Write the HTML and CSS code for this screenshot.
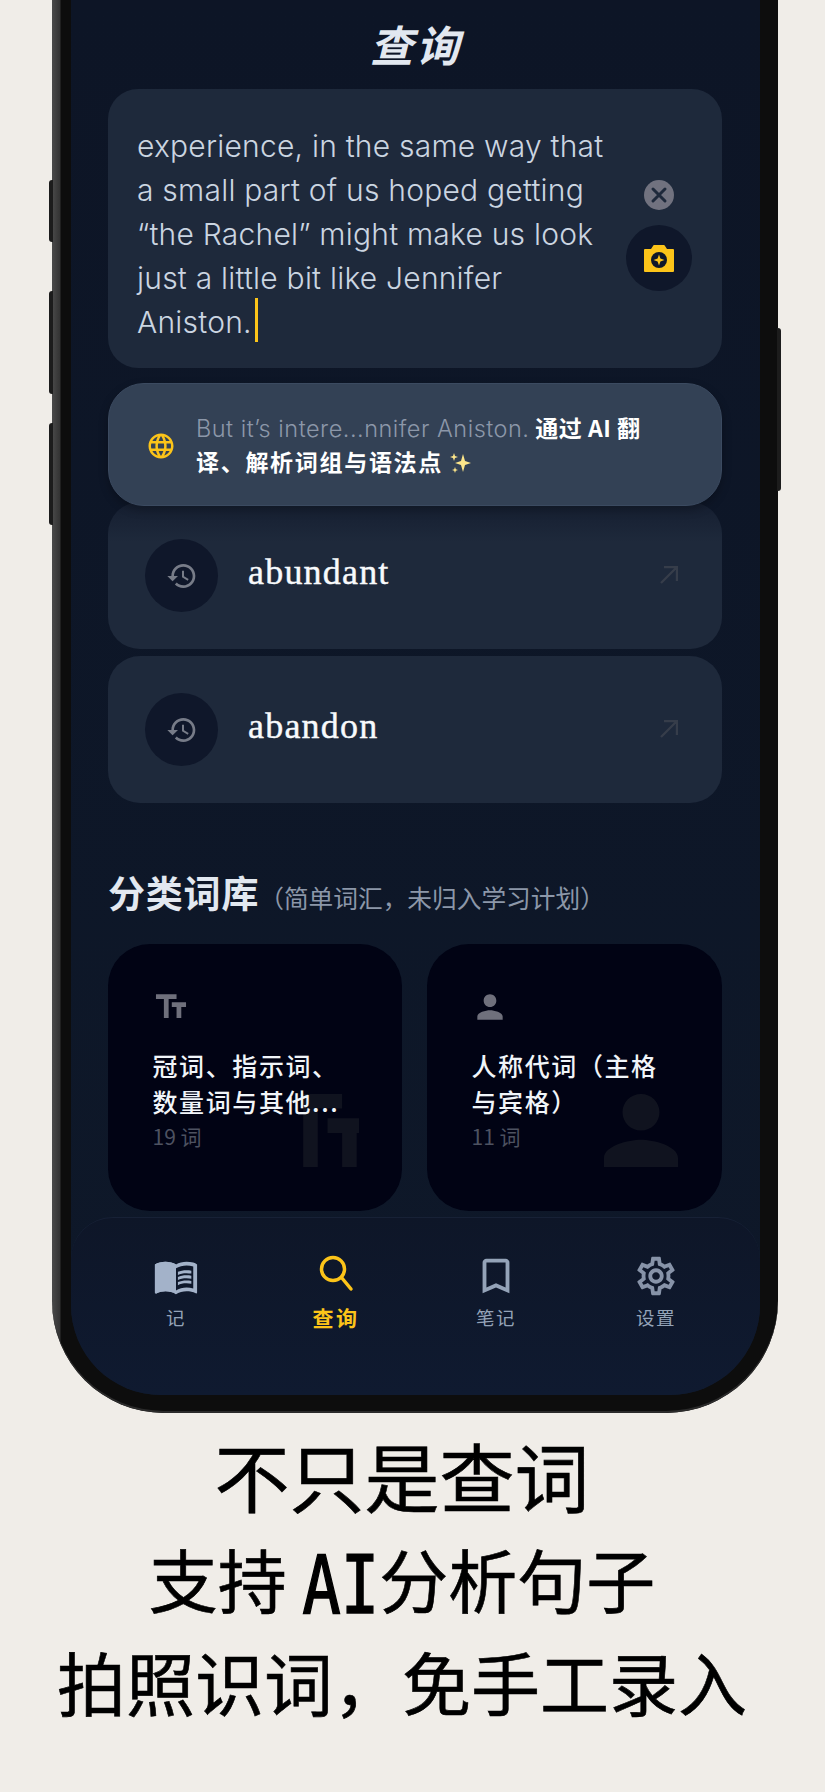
FILE: index.html
```html
<!DOCTYPE html>
<html lang="zh-CN">
<head>
    <meta charset="UTF-8">
    <meta name="viewport" content="width=device-width, initial-scale=1.0">
    <title>查询</title>
    <link rel="stylesheet" href="styles.css">
</head>
<body>
    <div class="phone">
        <span class="side-btn btn-a"></span>
        <span class="side-btn btn-b"></span>
        <span class="side-btn btn-c"></span>
        <span class="side-btn btn-d"></span>
        <div class="screen">
            <div class="content">
                <h1 class="title">查询</h1>

                <div class="search-card">
                    <p class="search-text">experience, in the same way that<br>a small part of us hoped getting<br>“the Rachel” might make us look<br>just a little bit like Jennifer<br>Aniston.<span class="caret"></span></p>
                    <div class="search-actions">
                        <svg class="clear-icon" viewBox="0 0 30 30"><circle cx="15" cy="15" r="15" fill="#71727f"/><path d="M9 9l12 12M21 9L9 21" stroke="#1e293b" stroke-width="3" stroke-linecap="round"/></svg>
                        <div class="camera-btn">
                            <svg width="30" height="27" viewBox="0 0 30 27"><path d="M1 4h6l2-3a1.5 1.5 0 0 1 1.200-1h9.600a1.500 1.500 0 0 1 1.200 1l2 3h6a1 1 0 0 1 1 1v21a1 1 0 0 1-1 1H1a1 1 0 0 1-1-1V5a1 1 0 0 1 1-1z" fill="#fcc419"/><circle cx="15" cy="15" r="8" fill="#0f172a"/><path d="M15 9.500l1.400 4.100 4.100 1.400-4.100 1.400-1.400 4.100-1.400-4.100-4.100-1.400 4.100-1.400z" fill="#fcc419"/></svg>
                        </div>
                    </div>
                </div>

                <div class="suggest-card">
                    <svg class="globe" viewBox="0 0 24 24" fill="#fcc419"><path d="M11.990 2C6.470 2 2 6.480 2 12s4.470 10 9.990 10C17.520 22 22 17.520 22 12S17.520 2 11.990 2zm6.930 6h-2.950c-.32-1.250-.78-2.450-1.380-3.560 1.840.63 3.370 1.910 4.330 3.560zM12 4.040c.83 1.200 1.480 2.530 1.910 3.960h-3.820c.43-1.430 1.080-2.760 1.910-3.960zM4.260 14C4.100 13.360 4 12.690 4 12s.1-1.360.26-2h3.380c-.08.66-.14 1.320-.14 2 0 .68.06 1.340.14 2H4.260zm.82 2h2.950c.32 1.250.78 2.450 1.380 3.560-1.840-.63-3.370-1.900-4.330-3.560zm2.950-8H5.080c.96-1.660 2.490-2.930 4.330-3.560C8.810 5.550 8.350 6.750 8.030 8zM12 19.960c-.83-1.200-1.480-2.530-1.910-3.960h3.820c-.43 1.430-1.080 2.760-1.910 3.960zM14.340 14H9.660c-.09-.66-.16-1.320-.16-2 0-.68.07-1.350.16-2h4.680c.09.65.16 1.320.16 2 0 .68-.07 1.340-.16 2zm.25 5.560c.6-1.110 1.060-2.310 1.380-3.560h2.950c-.96 1.650-2.490 2.930-4.330 3.560zM16.360 14c.08-.66.14-1.320.14-2 0-.68-.06-1.340-.14-2h3.380c.16.64.26 1.310.26 2s-.1 1.360-.26 2h-3.380z"/></svg>
                    <p class="suggest-text"><span class="suggest-quote">But it’s intere...nnifer Aniston.</span> 通过 AI 翻<br><span class="suggest-wide">译、解析词组与语法点</span> <svg class="sparkles" viewBox="0 0 24 24" fill="#fde68a"><path d="M14 3l2 7 6 2-6 2-2 7-2-7-6-2 6-2z"/><path d="M5 2l1 3 3 1-3 1-1 3-1-3-3-1 3-1zM6 16l.8 2.200L9 19l-2.200.8L6 22l-.8-2.200L3 19l2.200-.8z"/></svg></p>
                </div>

                <div class="history-list">
                    <div class="history-item first">
                        <div class="history-icon">
                            <svg width="32" height="32" viewBox="0 0 24 24" fill="#777c88"><path d="M13 3c-4.970 0-9 4.030-9 9H1l3.890 3.890.07.14L9 12H6c0-3.870 3.130-7 7-7s7 3.130 7 7-3.130 7-7 7c-1.930 0-3.680-.79-4.940-2.060l-1.420 1.420C8.270 19.990 10.510 21 13 21c4.970 0 9-4.030 9-9s-4.030-9-9-9zm-1 5v5l4.280 2.540.72-1.210-3.500-2.080V8H12z"/></svg>
                        </div>
                        <span class="history-word">abundant</span>
                        <svg class="history-arrow" viewBox="0 0 18 18"><path d="M1 17L17 1M4 1h13v14" fill="none" stroke="#363d4a" stroke-width="2.400"/></svg>
                    </div>
                    <div class="history-item">
                        <div class="history-icon">
                            <svg width="32" height="32" viewBox="0 0 24 24" fill="#777c88"><path d="M13 3c-4.970 0-9 4.030-9 9H1l3.890 3.890.07.14L9 12H6c0-3.870 3.130-7 7-7s7 3.130 7 7-3.130 7-7 7c-1.930 0-3.680-.79-4.940-2.060l-1.420 1.420C8.270 19.990 10.510 21 13 21c4.970 0 9-4.030 9-9s-4.030-9-9-9zm-1 5v5l4.280 2.540.72-1.210-3.500-2.080V8H12z"/></svg>
                        </div>
                        <span class="history-word">abandon</span>
                        <svg class="history-arrow" viewBox="0 0 18 18"><path d="M1 17L17 1M4 1h13v14" fill="none" stroke="#363d4a" stroke-width="2.400"/></svg>
                    </div>
                </div>

                <h2 class="section-title">分类词库<span class="section-note">（简单词汇，未归入学习计划）</span></h2>

                <div class="category-grid">
                    <div class="category-card">
                        <svg class="category-icon" viewBox="0 0 24 24" fill="#6f707c"><path d="M2.500 4v3h5v12h3V7h5V4h-13zm19 5h-9v3h3v7h3v-7h3V9z"/></svg>
                        <svg class="category-mark" viewBox="7.500 4 11.430 15" fill="#10131f"><path d="M2.500 4v3h5v12h3V7h5V4h-13zm19 5h-9v3h3v7h3v-7h3V9z"/></svg>
                        <p class="category-name">冠词、指示词、<br>数量词与其他...</p>
                        <p class="category-count">19 词</p>
                    </div>
                    <div class="category-card">
                        <svg class="category-icon" viewBox="0 0 24 24" fill="#6f707c"><path d="M12 12c2.210 0 4-1.790 4-4s-1.790-4-4-4-4 1.790-4 4 1.790 4 4 4zm0 2c-2.670 0-8 1.340-8 4v2h16v-2c0-2.660-5.330-4-8-4z"/></svg>
                        <svg class="category-mark person" viewBox="4 4 16 16" preserveAspectRatio="none" fill="#10131f"><path d="M12 12c2.210 0 4-1.790 4-4s-1.790-4-4-4-4 1.790-4 4 1.790 4 4 4zm0 2c-2.670 0-8 1.340-8 4v2h16v-2c0-2.660-5.330-4-8-4z"/></svg>
                        <p class="category-name">人称代词（主格<br>与宾格）</p>
                        <p class="category-count">11 词</p>
                    </div>
                </div>
            </div>

            <nav class="tab-bar">
                <div class="tab">
                    <svg class="tab-icon" viewBox="0 0 24 24" fill="#a3b2c9"><path d="M21 5c-1.110-.35-2.330-.5-3.500-.5-1.950 0-4.050.4-5.500 1.500-1.450-1.100-3.550-1.500-5.500-1.500S2.450 4.900 1 6v14.650c0 .25.25.5.5.5.1 0 .15-.05.25-.05C3.100 20.450 5.050 20 6.500 20c1.950 0 4.050.4 5.500 1.500 1.350-.85 3.800-1.500 5.500-1.500 1.650 0 3.350.3 4.750 1.050.1.05.15.05.25.05.25 0 .5-.25.5-.5V6c-.6-.45-1.250-.75-2-1zm0 13.500c-1.100-.35-2.300-.5-3.500-.5-1.700 0-4.150.65-5.500 1.500V8c1.350-.85 3.800-1.500 5.500-1.500 1.200 0 2.400.15 3.500.5v11.500z"/><path d="M1 6c1.450-1.100 3.550-1.500 5.500-1.500S10.550 4.900 12 6v15.500c-1.450-1.100-3.550-1.500-5.500-1.500-1.450 0-3.400.45-4.750 1.100L1 21z"/><path d="M17.500 10.500c.88 0 1.730.09 2.500.26V9.240c-.79-.15-1.640-.24-2.500-.24-1.700 0-3.240.29-4.500.83v1.660c1.130-.64 2.700-.99 4.500-.99zM13 12.490v1.660c1.130-.64 2.700-.99 4.500-.99.880 0 1.730.09 2.500.26V11.900c-.79-.15-1.640-.24-2.500-.24-1.700 0-3.240.3-4.500.83zM17.500 14.330c-1.700 0-3.240.29-4.500.83v1.660c1.130-.64 2.700-.99 4.500-.99.880 0 1.730.09 2.500.26v-1.520c-.79-.16-1.640-.24-2.500-.24z"/></svg>
                    <span class="tab-label">记</span>
                </div>
                <div class="tab active">
                    <svg class="tab-icon" viewBox="0 0 46 46"><circle cx="20" cy="18" r="11.500" fill="none" stroke="#fcc419" stroke-width="3.500"/><path d="M28.500 26.500L38 38" stroke="#fcc419" stroke-width="3.500" stroke-linecap="round"/></svg>
                    <span class="tab-label">查询</span>
                </div>
                <div class="tab">
                    <svg class="tab-icon" viewBox="0 0 24 24" fill="#94a3b8"><path d="M17 3H7c-1.100 0-2 .9-2 2v16l7-3 7 3V5c0-1.100-.9-2-2-2zm0 15l-5-2.180L7 18V5h10v13z"/></svg>
                    <span class="tab-label">笔记</span>
                </div>
                <div class="tab">
                    <svg class="tab-icon" viewBox="0 0 24 24" fill="#8793a8"><path d="M19.430 12.980c.04-.32.07-.64.07-.98 0-.34-.03-.66-.07-.98l2.110-1.650c.19-.15.24-.42.12-.64l-2-3.460c-.09-.16-.26-.25-.44-.25-.06 0-.12.01-.17.03l-2.490 1c-.52-.4-1.080-.73-1.690-.98l-.38-2.650C14.460 2.180 14.250 2 14 2h-4c-.25 0-.46.18-.49.42l-.38 2.650c-.61.25-1.170.59-1.690.98l-2.490-1c-.06-.02-.12-.03-.18-.03-.17 0-.34.09-.43.25l-2 3.460c-.13.22-.07.49.12.64l2.110 1.650c-.04.32-.07.65-.07.98 0 .33.03.66.07.98l-2.110 1.650c-.19.15-.24.42-.12.64l2 3.460c.09.16.26.25.44.25.06 0 .12-.01.17-.03l2.490-1c.52.4 1.080.73 1.690.98l.38 2.650c.03.24.24.42.49.42h4c.25 0 .46-.18.49-.42l.38-2.650c.61-.25 1.170-.59 1.690-.98l2.490 1c.06.02.12.03.18.03.17 0 .34-.09.43-.25l2-3.460c.12-.22.07-.49-.12-.64l-2.110-1.650zm-1.980-1.710c.04.31.05.52.05.73 0 .21-.02.43-.05.73l-.14 1.130.89.7 1.080.84-.7 1.210-1.270-.51-1.040-.42-.9.68c-.43.32-.84.56-1.250.73l-1.060.43-.16 1.130-.2 1.350h-1.400l-.19-1.350-.16-1.130-1.060-.43c-.43-.18-.83-.41-1.230-.71l-.91-.7-1.060.43-1.270.51-.7-1.210 1.080-.84.89-.7-.14-1.130c-.03-.31-.05-.54-.05-.74s.02-.43.05-.73l.14-1.130-.89-.7-1.080-.84.7-1.210 1.270.51 1.040.42.9-.68c.43-.32.84-.56 1.250-.73l1.060-.43.16-1.130.2-1.350h1.390l.19 1.350.16 1.130 1.060.43c.43.18.83.41 1.230.71l.91.7 1.060-.43 1.270-.51.7 1.210-1.070.85-.89.7.14 1.130zM12 8c-2.210 0-4 1.790-4 4s1.790 4 4 4 4-1.790 4-4-1.790-4-4-4zm0 6c-1.100 0-2-.9-2-2s.9-2 2-2 2 .9 2 2-.9 2-2 2z"/></svg>
                    <span class="tab-label">设置</span>
                </div>
            </nav>
        </div>
    </div>

    <div class="caption">
        <p class="caption-big">不只是查词</p>
        <p class="caption-line">支持 <span class="caption-latin">AI</span>分析句子</p>
        <p class="caption-line">拍照识词，免手工录入</p>
    </div>
</body>
</html>
```

FILE: styles.css
```css
* {
    box-sizing: border-box;
}

body {
    margin: 0;
    width: 825px;
    height: 1792px;
    overflow: hidden;
    background-color: #f0ede8;
    font-family: "Noto Sans CJK SC", sans-serif;
}

p, h1, h2 {
    margin: 0;
}

.phone {
    position: relative;
    width: 726px;
    height: 1413px;
    margin-left: 52px;
    padding: 0 18px 18px 19px;
    border-radius: 0 0 112px 112px;
    background: linear-gradient(90deg, #4a4a4a 0, #333 8px, #0d0d0d 9px, #0d0d0d 100%);
    box-shadow: inset 0 -2px 0 #2b2b2b;
}

.side-btn {
    position: absolute;
    width: 4px;
    background-color: #1c1c1c;
}

.btn-a { left: -3px; top: 180px; height: 62px; border-radius: 3px 0 0 3px; }
.btn-b { left: -3px; top: 291px; height: 103px; border-radius: 3px 0 0 3px; }
.btn-c { left: -3px; top: 423px; height: 102px; border-radius: 3px 0 0 3px; }
.btn-d { right: -3px; top: 328px; height: 163px; border-radius: 0 3px 3px 0; }

.screen {
    height: 1395px;
    display: flex;
    flex-direction: column;
    overflow: hidden;
    border-radius: 0 0 90px 90px;
    background: linear-gradient(180deg, #0d1526 0, #0e1829 100%);
}

.content {
    flex: 1;
    padding: 0 38px 0 37px;
}

.title {
    height: 89px;
    padding-top: 14px;
    text-indent: 2px;
    text-align: center;
    color: #e2e8f0;
    font-size: 43px;
    line-height: 58px;
    font-style: italic;
    font-weight: 700;
    letter-spacing: 3px;
}

.search-card {
    display: flex;
    justify-content: space-between;
    height: 279px;
    padding: 35px 30px 0 29px;
    border-radius: 30px;
    background-color: #1e293b;
}

.search-text {
    color: #cbd5e1;
    font-family: Inter, sans-serif;
    font-size: 30px;
    font-weight: 300;
    line-height: 44px;
    letter-spacing: 0.22px;
}

.caret {
    display: inline-block;
    width: 3px;
    height: 44px;
    margin-left: 3px;
    vertical-align: top;
    background-color: #fcc419;
    transform: translateY(-2px);
}

.search-actions {
    width: 66px;
    padding-top: 56px;
    display: flex;
    flex-direction: column;
    align-items: center;
    gap: 15px;
}

.clear-icon {
    width: 30px;
    height: 30px;
}

.camera-btn {
    width: 66px;
    height: 66px;
    display: flex;
    align-items: center;
    justify-content: center;
    border-radius: 50%;
    background-color: #0f172a;
}

.suggest-card {
    position: relative;
    z-index: 1;
    display: flex;
    align-items: center;
    height: 123px;
    margin-top: 15px;
    padding: 0 36px 0 37px;
    gap: 20px;
    border-radius: 36px;
    border: 1px solid #3b4a60;
    background-color: #334155;
    box-shadow: 0 4px 10px rgba(0, 0, 0, 0.25);
}

.globe {
    flex: none;
    width: 30px;
    height: 30px;
    margin-top: 2px;
}

.suggest-text {
    color: #fff;
    font-size: 23px;
    font-weight: 700;
    line-height: 33px;
    letter-spacing: 0.5px;
}

.suggest-quote {
    color: #8c97a9;
    font-family: Inter, sans-serif;
    font-size: 23.500px;
    font-weight: 300;
}

.suggest-wide {
    letter-spacing: 1.700px;
}

.sparkles {
    width: 24px;
    height: 24px;
    vertical-align: -4px;
}

.history-list {
    margin-top: -4px;
    display: flex;
    flex-direction: column;
    gap: 7px;
}

.history-item {
    display: flex;
    align-items: center;
    height: 147px;
    padding: 0 44px 0 37px;
    border-radius: 32px;
    background-color: #1e293b;
}

.history-item.first {
    background: linear-gradient(180deg, #151e30 0, #1e293b 40px);
}

.history-icon {
    flex: none;
    width: 73px;
    height: 73px;
    display: flex;
    align-items: center;
    justify-content: center;
    border-radius: 50%;
    background-color: #0f172a;
}

.history-word {
    flex: 1;
    margin-left: 30px;
    margin-top: -8px;
    color: #f8fafc;
    font-family: "Liberation Serif", serif;
    font-size: 36px;
    letter-spacing: 1.200px;
    -webkit-text-stroke: 0.4px #f8fafc;
}

.history-arrow {
    width: 18px;
    height: 18px;
    margin-top: -2px;
}

.section-title {
    margin-top: 66px;
    height: 75px;
    color: #e2e8f0;
    font-size: 37px;
    font-weight: 700;
    line-height: 46px;
    letter-spacing: 0.8px;
}

.section-note {
    color: #8c97a9;
    font-size: 24.700px;
    font-weight: 400;
    letter-spacing: 0;
}

.category-grid {
    display: grid;
    grid-template-columns: 294px 295px;
    gap: 25px;
}

.category-card {
    position: relative;
    height: 267px;
    padding: 44px 0 0 44.500px;
    border-radius: 42px;
    background-color: #010314;
    overflow: hidden;
}

.category-icon {
    display: block;
    width: 38px;
    height: 38px;
    margin-left: -1px;
}

.category-mark {
    position: absolute;
    left: 195px;
    top: 150px;
    width: 56px;
    height: 73px;
}

.category-mark.person {
    left: 177px;
    width: 74px;
}

.category-name {
    position: relative;
    margin-top: 21px;
    color: #f1f5f9;
    font-size: 25px;
    font-weight: 500;
    line-height: 36px;
    letter-spacing: 1.600px;
}

.category-count {
    position: relative;
    margin-top: 1px;
    color: #4d5261;
    font-size: 21px;
    line-height: 32px;
}

.tab-bar {
    flex: none;
    height: 178px;
    margin-top: 6px;
    padding: 35px 24px 0 25px;
    display: grid;
    grid-template-columns: repeat(4, 1fr);
    border-top: 1px solid #172136;
    border-radius: 42px 42px 0 0;
    background: linear-gradient(180deg, #0e1628 0, #0f1a30 100%);
}

.tab {
    display: flex;
    flex-direction: column;
    align-items: center;
}

.tab-icon {
    width: 46px;
    height: 46px;
}

.tab-label {
    margin-top: 4px;
    color: #94a3b8;
    font-size: 18.500px;
    line-height: 28px;
    letter-spacing: 1.500px;
}

.tab.active .tab-icon {
    margin-top: -2px;
}

.tab.active .tab-label {
    margin-top: 6px;
    color: #fcc419;
    font-size: 21px;
    font-weight: 700;
    letter-spacing: 2.500px;
}

.caption {
    text-align: center;
    color: #000;
    padding-right: 21px;
    -webkit-text-stroke: 0.6px #000;
}

.caption-big {
    margin-top: 10px;
    font-size: 75px;
    font-weight: 400;
    line-height: 104px;
}

.caption-line {
    height: 103px;
    font-size: 69px;
    font-weight: 400;
    line-height: 103px;
}

.caption-latin {
    display: inline-block;
    font-family: "DejaVu Sans Mono", monospace;
    font-size: 64px;
    font-weight: 400;
    line-height: 1;
    -webkit-text-stroke: 1.200px #000;
    transform: scaleY(1.24);
}
```
